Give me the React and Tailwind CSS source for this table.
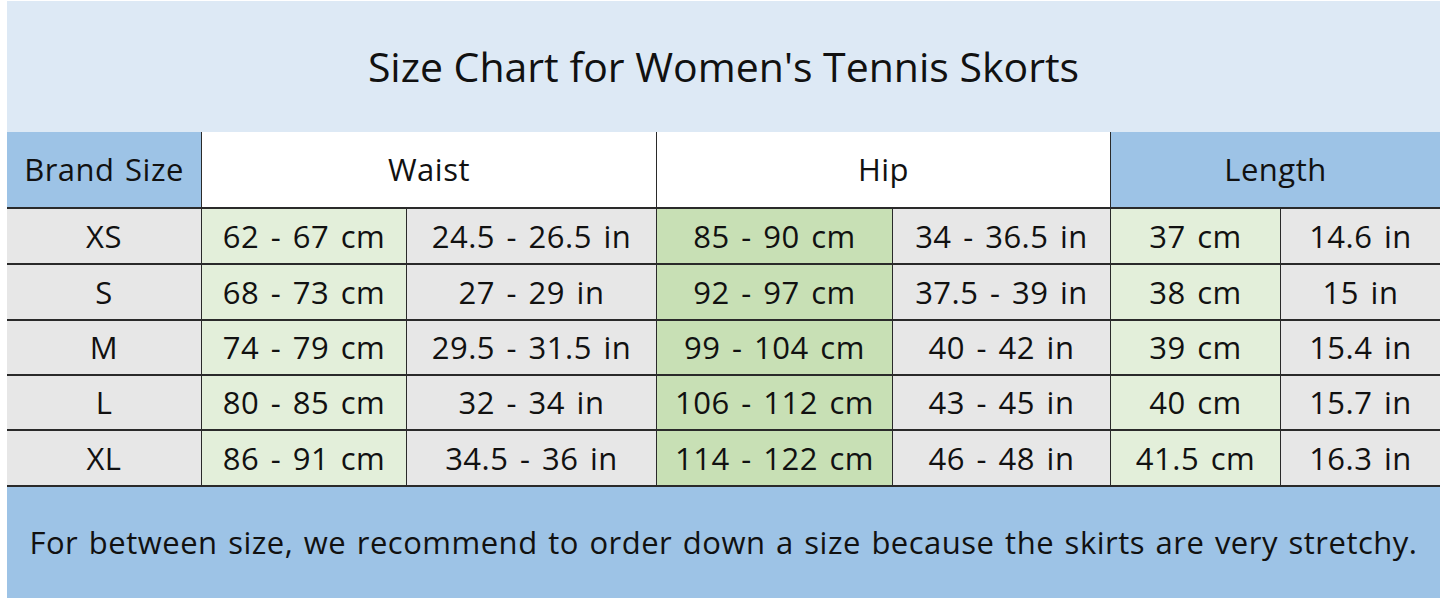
const rows = [
  ["XS", "62 - 67 cm", "24.5 - 26.5 in", "85 - 90 cm", "34 - 36.5 in", "37 cm", "14.6 in"],
  ["S", "68 - 73 cm", "27 - 29 in", "92 - 97 cm", "37.5 - 39 in", "38 cm", "15 in"],
  ["M", "74 - 79 cm", "29.5 - 31.5 in", "99 - 104 cm", "40 - 42 in", "39 cm", "15.4 in"],
  ["L", "80 - 85 cm", "32 - 34 in", "106 - 112 cm", "43 - 45 in", "40 cm", "15.7 in"],
  ["XL", "86 - 91 cm", "34.5 - 36 in", "114 - 122 cm", "46 - 48 in", "41.5 cm", "16.3 in"],
];

// row heights include the 2px bottom rule
const rowH = ["h-[56px]", "h-[56px]", "h-[55px]", "h-[55px]", "h-[56px]"];

// background per column in body rows
const cellBg = [
  "bg-[#e7e7e7]",
  "bg-[#e3efda]",
  "bg-[#e7e7e7]",
  "bg-[#c8e0b5]",
  "bg-[#e7e7e7]",
  "bg-[#e3efda]",
  "bg-[#e7e7e7]",
];

export default function App() {
  return (
    <div className="w-[1445px] h-[602px] bg-white pt-[1px] pl-[7px] font-['Open_Sans',sans-serif] text-[#111]">
      <div className="w-[1433px] flex flex-col">
        {/* title */}
        <div className="h-[131px] bg-[#dde9f5] flex items-center justify-center">
          <h1 className="text-[41px]">Size Chart for Women's Tennis Skorts</h1>
        </div>

        {/* header row */}
        <div className="grid grid-cols-[195px_455px_454px_329px] h-[77px] text-[31px] tracking-[0.5px] [word-spacing:2px] border-b-2 border-[#2a2a2a]">
          <div className="bg-[#9dc3e6] flex items-center justify-center border-r border-[#2a2a2a]">Brand Size</div>
          <div className="bg-white flex items-center justify-center border-r border-[#2a2a2a]">Waist</div>
          <div className="bg-white flex items-center justify-center border-r border-[#2a2a2a]">Hip</div>
          <div className="bg-[#9dc3e6] flex items-center justify-center">Length</div>
        </div>

        {/* body rows */}
        {rows.map((row, r) => (
          <div
            key={row[0]}
            className={`grid grid-cols-[195px_205px_250px_236px_218px_170px_159px] ${rowH[r]} text-[31px] tracking-[0.5px] [word-spacing:3px] border-b-2 border-[#2a2a2a]`}
          >
            {row.map((v, i) => (
              <div
                key={i}
                className={`${cellBg[i]} flex items-center justify-center ${i < 6 ? "border-r border-[#2a2a2a]" : ""}`}
              >
                {v}
              </div>
            ))}
          </div>
        ))}

        {/* footer */}
        <div className="h-[111px] bg-[#9dc3e6] flex items-center justify-center">
          <p className="text-[31px] tracking-[0.5px] [word-spacing:2px]">
            For between size, we recommend to order down a size because the skirts are very stretchy.
          </p>
        </div>
      </div>
    </div>
  );
}
